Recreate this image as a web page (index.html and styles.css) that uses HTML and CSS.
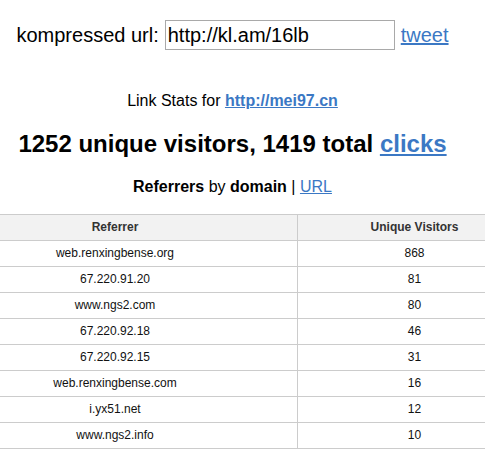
FILE: index.html
```html
<!DOCTYPE html>
<html>
<head>
<meta charset="utf-8">
<link rel="stylesheet" href="styles.css">
</head>
<body>
<div class="page">
  <div class="shorten">
    <span class="label">kompressed url:</span>
    <input class="url-box" type="text" value="http://kl.am/16lb">
    <a class="tweet" href="#">tweet</a>
  </div>
  <p class="stats-for">Link Stats for <a class="bold-link" href="#">http://mei97.cn</a></p>
  <h1 class="totals">1252 unique visitors, 1419 total <a href="#">clicks</a></h1>
  <p class="ref-switch"><b>Referrers</b> by <b>domain</b> | <a href="#">URL</a></p>
  <div class="table-wrap">
    <table class="ref-table">
      <thead>
        <tr><th class="col-ref">Referrer</th><th>Unique Visitors</th></tr>
      </thead>
      <tbody>
        <tr><td>web.renxingbense.org</td><td>868</td></tr>
        <tr><td>67.220.91.20</td><td>81</td></tr>
        <tr><td>www.ngs2.com</td><td>80</td></tr>
        <tr><td>67.220.92.18</td><td>46</td></tr>
        <tr><td>67.220.92.15</td><td>31</td></tr>
        <tr><td>web.renxingbense.com</td><td>16</td></tr>
        <tr><td>i.yx51.net</td><td>12</td></tr>
        <tr><td>www.ngs2.info</td><td>10</td></tr>
      </tbody>
    </table>
  </div>
</div>
</body>
</html>
```

FILE: styles.css
```css
html, body {
  margin: 0;
  padding: 0;
  background: #fff;
  overflow: hidden;
}
body {
  font-family: "Liberation Sans", Arial, sans-serif;
  color: #000;
}
.page {
  width: 465px;
  text-align: center;
}
a {
  color: #3b78c4;
  text-decoration: underline;
}
.shorten {
  padding-top: 20px;
  height: 30px;
  display: flex;
  justify-content: center;
  align-items: center;
  font-size: 20px;
}
.label {
  margin-right: 6px;
}
.url-box {
  box-sizing: border-box;
  width: 230px;
  height: 30px;
  border: 1px solid #a9a9a9;
  padding: 0 2px;
  font-family: "Liberation Sans", Arial, sans-serif;
  font-size: 20px;
  color: #000;
  margin: 0 6px 0 0;
  outline: none;
}
.stats-for {
  margin: 42px 0 0;
  font-size: 16px;
  line-height: 18px;
}
.bold-link {
  font-weight: bold;
}
.totals {
  margin: 20px 0 0;
  font-size: 24px;
  line-height: 28px;
  font-weight: bold;
}
.ref-switch {
  margin: 20px 0 0;
  font-size: 16px;
  line-height: 18px;
}
.table-wrap {
  margin-top: 18px;
  display: flex;
  justify-content: center;
}
.ref-table {
  flex: none;
  width: 600px;
  border-collapse: collapse;
  font-size: 12px;
}
.ref-table th,
.ref-table td {
  border: 1px solid #cccccc;
  padding: 0;
  line-height: 25px;
  height: 25px;
  text-align: center;
}
.ref-table th {
  background: #f2f2f2;
  color: #333;
  font-weight: bold;
}
.ref-table td {
  color: #111;
}
.col-ref {
  width: 363px;
}
```
